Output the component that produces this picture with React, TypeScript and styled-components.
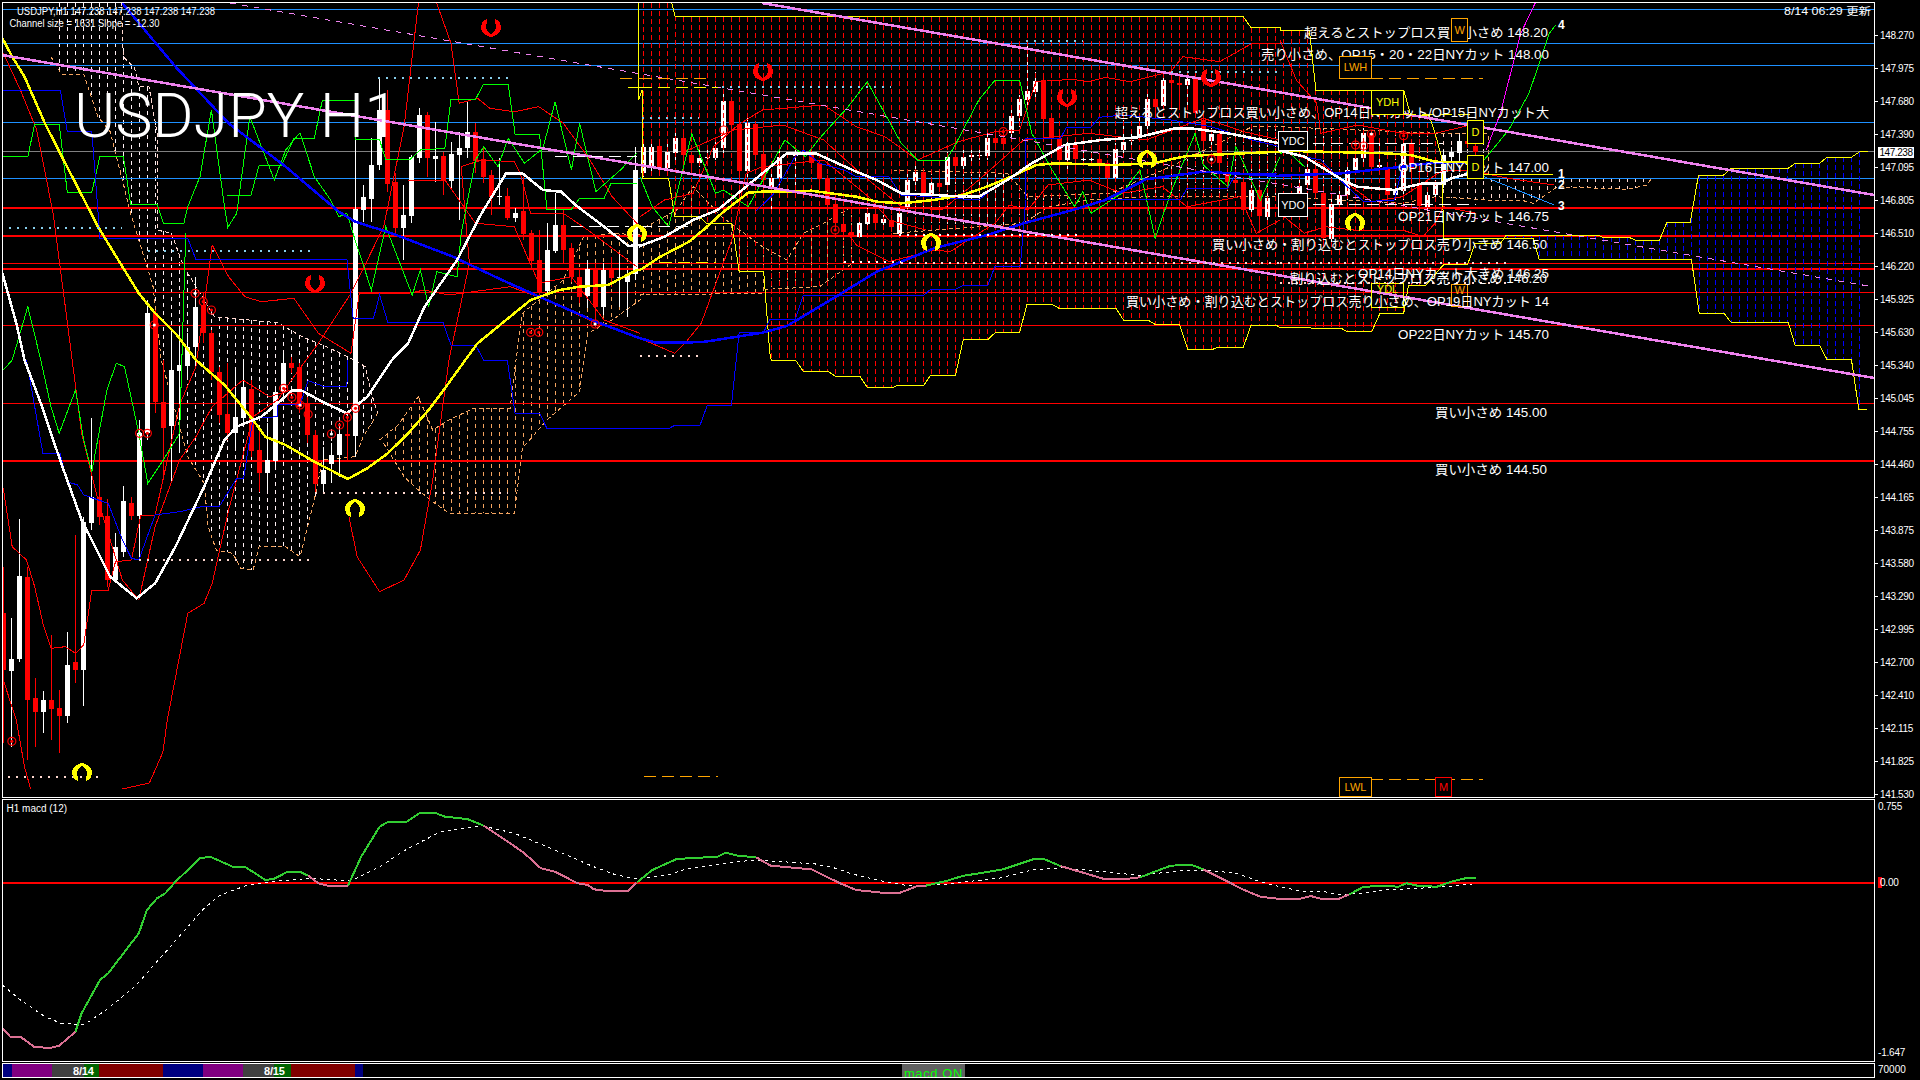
import styled, { createGlobalStyle } from "styled-components";

type Pt = [number, number];
type Candle = [number, number, number, number, number, string];

// zoom-crop coordinates -> page pixels (crop x is 2.45 per px, y is 3 per px)
const pts = (tile: number, s: string, dy = 0): Pt[] =>
  s
    .trim()
    .split(/\s+/)
    .map((p) => {
      const [x, y] = p.split(",").map(Number);
      return [x / 2.45 + tile * 640, (y + dy) / 3] as Pt;
    });

const toD = (p: Pt[]) => p.map(([x, y]) => `${x.toFixed(1)},${y.toFixed(1)}`).join(" ");

const interp = (p: Pt[], x: number) => {
  if (x < p[0][0] || x > p[p.length - 1][0]) return null;
  for (let i = 0; i < p.length - 1; i++) {
    const [a, b] = [p[i], p[i + 1]];
    if (x >= a[0] && x <= b[0]) {
      if (b[0] === a[0]) return b[1];
      return a[1] + ((x - a[0]) / (b[0] - a[0])) * (b[1] - a[1]);
    }
  }
  return null;
};

const RED = "#ff0000";
const DODGER = "#1e90ff";
const VIOLET = "#ee82ee";
const YELLOW = "#ffff00";
const BLUE = "#0000ff";
const LIME = "#00ff00";
const ORANGE = "#ffa500";
const SKY = "#87ceeb";
const PEACH = "#ffd8d0";
const PALE = "#fff0f4";
const SANDY = "#f4a460";

const candles0: Candle[] = [
  [12, 1840, 2010, 1700, 2230, "r"], [27, 1977, 2012, 1855, 2240, "w"], [47, 1728, 1977, 1558, 1985, "w"],
  [67, 1730, 2100, 1700, 2280, "r"], [87, 2094, 2135, 2035, 2240, "r"], [106, 2100, 2135, 2073, 2200, "w"],
  [126, 2100, 2127, 1905, 2220, "r"], [146, 2125, 2148, 2070, 2260, "r"], [165, 1995, 2148, 1896, 2170, "w"],
  [185, 1986, 2010, 1605, 2050, "r"], [204, 1567, 2010, 1550, 2118, "w"], [224, 1490, 1568, 1255, 1590, "w"],
  [243, 1490, 1550, 1320, 1575, "r"], [263, 1548, 1740, 1498, 1760, "r"], [283, 1640, 1740, 1600, 1740, "w"],
  [302, 1503, 1655, 1458, 1670, "w"], [322, 1510, 1548, 1490, 1560, "r"], [342, 1300, 1548, 1260, 1680, "w"],
  [361, 940, 1300, 900, 1320, "w"], [381, 940, 1205, 930, 1240, "r"], [400, 1205, 1285, 1080, 1430, "r"],
  [420, 1110, 1277, 1000, 1450, "w"], [440, 1095, 1113, 980, 1360, "w"], [459, 1040, 1098, 1000, 1130, "w"],
  [479, 920, 1040, 830, 1100, "w"], [498, 915, 1000, 880, 1030, "r"], [518, 1000, 1115, 990, 1140, "r"],
  [538, 1115, 1245, 1100, 1270, "r"], [557, 1243, 1300, 1090, 1320, "r"], [577, 1250, 1300, 1110, 1345, "w"],
  [597, 1160, 1255, 1080, 1280, "w"], [616, 1168, 1352, 1140, 1370, "r"], [636, 1350, 1420, 1280, 1475, "r"],
  [655, 1380, 1418, 1270, 1470, "w"], [675, 1177, 1382, 1160, 1400, "w"], [695, 1090, 1177, 1060, 1200, "w"],
  [714, 1090, 1105, 1070, 1120, "r"], [734, 1102, 1220, 1090, 1240, "r"], [753, 1210, 1305, 1190, 1330, "r"],
  [773, 1305, 1452, 1290, 1480, "r"], [792, 1410, 1452, 1340, 1480, "w"], [812, 1365, 1392, 1330, 1450, "w"],
  [832, 1302, 1365, 1270, 1430, "w"], [851, 1302, 1308, 1250, 1380, "r"], [871, 628, 1308, 415, 1370, "w"],
  [890, 590, 630, 555, 665, "w"], [910, 495, 597, 415, 665, "w"], [930, 330, 495, 235, 510, "w"],
  [949, 330, 552, 270, 575, "r"], [969, 545, 685, 520, 710, "r"], [988, 645, 685, 555, 780, "w"],
  [1008, 470, 648, 465, 670, "w"], [1028, 345, 473, 325, 490, "w"], [1047, 345, 475, 335, 530, "r"],
  [1067, 468, 476, 365, 545, "w"], [1086, 468, 542, 455, 585, "r"], [1106, 462, 542, 425, 565, "w"],
  [1126, 445, 465, 395, 660, "w"], [1145, 395, 445, 305, 475, "w"], [1165, 397, 483, 370, 520, "r"],
  [1185, 478, 530, 440, 550, "r"], [1204, 525, 592, 510, 645, "r"], [1224, 588, 592, 475, 615, "w"],
  [1243, 588, 655, 565, 660, "r"], [1263, 640, 655, 625, 665, "w"], [1283, 632, 702, 530, 720, "r"],
  [1302, 698, 782, 690, 800, "r"], [1322, 780, 875, 690, 890, "r"], [1341, 750, 872, 670, 880, "w"],
  [1361, 675, 752, 580, 760, "w"], [1380, 675, 750, 630, 790, "r"], [1400, 745, 830, 730, 845, "r"],
  [1420, 830, 890, 810, 910, "r"], [1439, 808, 888, 780, 925, "w"], [1459, 810, 920, 790, 980, "r"],
  [1479, 810, 920, 790, 945, "w"], [1498, 810, 833, 770, 860, "r"], [1518, 830, 835, 760, 920, "w"],
  [1537, 822, 845, 810, 950, "w"], [1557, 510, 822, 440, 840, "w"],
];

const candles1: Candle[] = [
  [8, 440, 518, 420, 530, "w"], [27, 440, 500, 425, 515, "w"], [47, 438, 505, 420, 525, "r"], [67, 455, 505, 430, 520, "w"],
  [87, 415, 458, 395, 480, "w"], [106, 415, 465, 395, 490, "r"], [126, 465, 490, 455, 520, "r"], [146, 473, 490, 440, 500, "w"],
  [165, 472, 475, 440, 495, "w"], [185, 445, 475, 415, 480, "w"], [204, 303, 445, 275, 460, "w"], [224, 303, 375, 295, 450, "r"],
  [243, 372, 512, 350, 530, "r"], [263, 368, 512, 350, 535, "w"], [283, 372, 464, 362, 480, "r"], [302, 462, 540, 450, 575, "r"],
  [322, 535, 560, 510, 630, "w"], [342, 470, 533, 440, 570, "w"], [381, 462, 468, 445, 570, "w"], [400, 458, 466, 440, 480, "r"],
  [420, 465, 490, 450, 505, "r"], [440, 490, 537, 480, 565, "r"], [459, 535, 615, 525, 630, "r"], [479, 612, 670, 600, 690, "r"],
  [498, 672, 695, 660, 705, "r"], [518, 695, 710, 690, 725, "r"], [538, 670, 710, 660, 715, "w"], [557, 640, 672, 625, 690, "w"],
  [577, 643, 670, 630, 685, "r"], [597, 657, 670, 645, 680, "w"], [616, 660, 680, 645, 695, "r"], [636, 640, 703, 625, 708, "w"],
  [655, 540, 620, 520, 630, "w"], [675, 515, 542, 495, 560, "w"], [695, 515, 582, 505, 600, "r"], [714, 548, 585, 535, 600, "w"],
  [734, 550, 560, 520, 575, "r"], [753, 472, 555, 455, 570, "w"], [773, 472, 498, 460, 515, "r"], [792, 472, 498, 450, 510, "w"],
  [812, 465, 472, 440, 490, "w"], [832, 465, 468, 440, 480, "w"], [851, 415, 468, 395, 480, "w"], [871, 415, 430, 395, 445, "r"],
  [891, 415, 432, 390, 445, "r"], [910, 347, 398, 320, 410, "w"], [930, 298, 347, 285, 380, "w"], [949, 273, 300, 120, 330, "w"],
  [969, 243, 275, 215, 300, "w"], [988, 240, 357, 232, 410, "r"], [1008, 354, 415, 340, 440, "r"], [1028, 415, 480, 400, 510, "r"],
  [1047, 435, 480, 415, 515, "w"], [1067, 435, 478, 420, 520, "r"], [1086, 477, 479, 450, 490, "w"], [1106, 477, 479, 455, 495, "w"],
  [1126, 478, 492, 465, 510, "r"], [1145, 490, 535, 480, 580, "r"], [1165, 448, 535, 430, 545, "w"], [1185, 425, 450, 360, 460, "w"],
  [1204, 421, 424, 400, 440, "w"], [1224, 378, 412, 355, 425, "w"], [1243, 298, 378, 270, 390, "w"], [1263, 298, 320, 280, 340, "r"],
  [1283, 240, 318, 225, 330, "w"], [1302, 240, 250, 210, 330, "r"], [1322, 250, 255, 225, 320, "r"], [1341, 238, 255, 225, 320, "w"],
  [1361, 238, 340, 225, 355, "r"], [1380, 360, 423, 350, 445, "r"], [1400, 402, 423, 385, 440, "w"], [1420, 402, 490, 395, 540, "r"],
  [1439, 515, 545, 505, 570, "r"], [1459, 540, 548, 530, 560, "r"], [1479, 545, 630, 535, 645, "r"], [1498, 570, 630, 555, 645, "w"],
  [1518, 570, 648, 560, 690, "r"], [1537, 595, 650, 585, 670, "w"],
];

const candles2: Candle[] = [
  [47, 558, 590, 530, 600, "w"], [67, 508, 555, 490, 570, "w"], [87, 508, 580, 495, 595, "r"], [106, 580, 715, 570, 730, "r"],
  [126, 612, 718, 595, 735, "w"], [146, 585, 612, 560, 615, "w"], [165, 510, 585, 495, 600, "w"], [185, 475, 510, 450, 525, "w"],
  [204, 400, 475, 385, 490, "w"], [224, 400, 500, 390, 510, "r"], [243, 495, 500, 420, 525, "w"], [263, 500, 585, 490, 610, "r"],
  [283, 572, 585, 545, 600, "w"], [302, 432, 572, 415, 600, "w"], [322, 432, 505, 420, 545, "r"], [342, 555, 618, 500, 690, "r"],
  [361, 585, 620, 575, 640, "w"], [381, 555, 585, 540, 595, "w"], [400, 465, 555, 450, 565, "w"], [420, 455, 470, 440, 495, "w"],
  [440, 423, 458, 405, 480, "w"], [459, 423, 432, 400, 445, "r"], [479, 438, 455, 432, 470, "r"],
];

const allCandles = [
  ...candles0.map((c) => [0, ...c] as [number, ...Candle]),
  ...candles1.map((c) => [1, ...c] as [number, ...Candle]),
  ...candles2.map((c) => [2, ...c] as [number, ...Candle]),
].map(([t, zx, a, b, c, d, col]) => {
  const rx = zx / 2.45 + t * 640;
  const x = 3 + 8 * Math.round((rx - 3) / 8);
  return { x, top: a / 3, bot: b / 3, hi: c / 3, lo: d / 3, col };
});

// ichimoku edges
const redTop = [
  ...pts(1, "5,8 78,8 86,50 1478,50 1497,83 1568,83"),
  ...pts(2, "0,92 72,92 88,270 303,270 320,345 365,345 380,400 398,480 400,700"),
];
const redBot = [
  ...pts(1, "5,8 5,535 70,535 85,650 145,650 163,670 225,670 243,815 303,815 318,1060"),
  ...pts(1, "322,482 382,482 400,514 460,514 478,528 538,528 557,562 620,562 632,556 695,556 712,526 773,526 792,418 853,418 870,398 930,398 948,314 1010,314 1027,325 1166,325 1185,361 1245,361 1262,373 1322,373 1342,448 1403,448 1417,442 1478,442 1497,376 1560,376", 600),
  ...pts(2, "0,983 150,985 163,994 225,994 245,940 303,940 315,855 358,855 400,795"),
];
const yellowA = [
  ...redTop,
  ...pts(2, "400,715 550,715 620,715 635,778 1008,778 1027,940 1088,940 1105,967 1245,967 1262,1036 1322,1036 1340,1078 1400,1078 1418,1228 1438,1228"),
];
const blueTop = pts(2, "555,705 780,705 790,712 855,712 870,720 930,720 948,667 1005,667 1025,527 1085,527 1105,505 1245,505 1262,490 1322,490 1340,472 1400,472 1420,455 1440,455");
const blueBot = pts(2, "555,715 620,715 635,778 1008,778 1027,940 1088,940 1105,967 1245,967 1262,1036 1322,1036 1340,1078 1400,1078 1418,1228 1438,1228");
const yellowB = [
  ...pts(0, "1565,8 1565,300"),
  ...pts(1, "5,270 5,535").map(([x, y]) => [x, y] as Pt),
  ...redBot.slice(2),
  ...pts(2, "460,792 478,730 540,730"),
  ...blueTop,
];

const paleTop = pts(0, "125,8 298,8 302,170 330,205 340,260 365,260 385,400 385,690 420,700 450,800 525,950 680,968 740,1010 800,1040 860,1075 895,1100 910,1180 925,1240");
const paleBot = pts(0, "125,170 150,222 205,222 240,350 270,395 300,540 320,640 345,740 375,860 395,1080 460,1370 500,1450 510,1580 530,1650 570,1660 590,1705 620,1710 635,1640 700,1640 735,1670 770,1500 790,1380 870,1370 890,1310 925,1240");
const sandTop = [
  ...pts(0, "930,1320 975,1275 1025,1190 1060,1290 1100,1260 1160,1225 1250,1225 1262,1100 1280,940 1380,840 1430,710 1500,700 1568,705"),
  ...pts(1, "0,690 90,630 130,560 200,650 300,740 360,780 400,700 450,670 520,620"),
];
const sandBot = [
  ...pts(0, "940,1330 990,1430 1020,1465 1060,1505 1100,1540 1260,1540 1280,1345 1340,1260 1420,1175 1430,1080 1440,1000 1500,960 1568,900"),
  ...pts(1, "0,885 300,880 310,868 440,860 520,790"),
];
const pale2Top = [
  ...pts(1, "620,510 900,520 950,590 1150,580 1300,500 1500,380 1568,380"),
  ...pts(2, "0,380 385,400 510,400 510,535 910,535"),
];
const pale2Bot = [
  ...pts(1, "620,700 940,670 1000,620 1100,600 1240,590 1568,590"),
  ...pts(2, "0,590 300,610 380,590 510,600 590,600 620,610 680,560 850,568 900,555 910,535"),
];

const hatch = (top: Pt[], bot: Pt[]) => {
  const out: [number, number, number][] = [];
  for (let k = 0; k < 240; k++) {
    const x = 3 + 8 * k;
    const a = interp(top, x);
    const b = interp(bot, x);
    if (a !== null && b !== null && b > a) out.push([x, a, b]);
  }
  return out;
};

const yellowMA = [
  ...pts(0, "6,115 30,170 60,230 110,370 160,490 240,680 300,800 340,880 380,940 430,1000 480,1080 550,1155 620,1260 650,1310 700,1335 770,1385 852,1437 900,1405 950,1360 1000,1300 1050,1230 1090,1165 1140,1080 1170,1030 1230,970 1300,900 1370,870 1420,860 1490,855 1560,810"),
  ...pts(1, "0,810 50,770 120,725 160,685 200,640 265,578 300,575 380,575 420,572 530,590 580,605 640,610 720,600 790,585 850,560 920,525 970,495 1020,490 1160,495 1260,490 1300,478 1340,468 1480,460 1568,455"),
  ...pts(2, "0,452 260,460 320,465 380,485 460,487"),
];
const whiteMA = [
  ...pts(0, "6,820 40,970 60,1080 100,1210 150,1390 200,1560 270,1730 335,1795 380,1750 430,1640 500,1460 550,1320 580,1280 640,1250 690,1200 715,1172 740,1172 790,1205 850,1240 900,1190 960,1080 1000,1030 1040,920 1120,780 1180,640 1240,520 1280,520 1330,570 1375,575 1410,615 1480,680 1540,738 1568,735"),
  ...pts(1, "0,738 60,710 130,660 190,630 250,570 310,510 360,460 430,460 530,515 580,540 640,580 800,590 830,590 900,540 960,490 1040,435 1130,420 1220,412 1310,385 1350,385 1440,400 1568,430"),
  ...pts(2, "0,452 60,470 160,545 190,560 280,570 350,550 395,550 420,535 480,515"),
];
const blueMA = [
  ...pts(0, "300,10 430,200 560,370 700,500 830,635 870,665 960,700 1110,770 1230,840 1330,895 1460,965 1568,1015"),
  ...pts(1, "0,415 40,428 105,428 160,425 300,398 360,378 480,290 580,215 720,145 850,105 940,70 1060,30 1140,0", 600),
  ...pts(1, "1240,538 1380,515 1568,528"),
  ...pts(2, "0,527 150,520 300,500 380,488 460,488"),
];

const thinBlue = [
  pts(0, "6,270 148,270 165,394 225,394 245,715 460,715 480,778 850,778 865,955 915,955 930,885 950,967 1085,967 1105,1035 1165,1035 1185,1080 1243,1080 1262,1240 1322,1240 1340,1285 1568,1285"),
  pts(0, "65,1080 105,1360 147,1360 165,1445 190,1455 205,1485 265,1510 300,1620 322,1675 340,1680 380,1545 440,1535 500,1518 538,1518 580,1435 597,1435 605,1370 620,1255 680,1250 680,1215 735,1213 755,1142 790,1158 850,1158 852,1080"),
  pts(1, "0,686 70,686 85,676 147,676 165,616 224,616 243,397 303,397 318,358 380,358 400,286 695,286 712,268 773,268 792,256 852,256 870,198 932,198 945,0", 600),
  pts(1, "945,598 945,415 1030,415 1045,382 1105,382 1125,352 1185,345 1300,360 1400,380 1500,420 1568,440"),
  pts(1, "1145,598 1325,598 1340,565 1440,565 1460,520 1560,520"),
  pts(2, "60,470 100,480 165,560 205,605 280,600 300,500 340,490 460,490"),
  pts(1, "285,632 325,585 380,470 400,450 440,490 500,510 530,530 610,530 640,585 830,600 870,560 900,540"),
];

const thinGreen = [
  pts(0, "6,470 68,470 85,372 145,372 165,577 225,577 245,468 302,468 320,612 385,612 400,670 450,672 460,620 490,530 518,330 550,620 558,682 580,640 612,350 672,540 700,450 735,398 770,530 810,600 830,650 850,640 870,720 910,870 945,680 1010,885 1030,810 1050,920 1070,815 1120,830 1130,700 1165,480 1185,440 1220,500 1245,415 1285,490 1330,445 1360,305 1400,510 1420,370 1460,575 1520,510 1560,460"),
  pts(0, "555,585 615,585 635,495 690,495 720,415 770,415 790,300 870,300 870,418 930,420 945,478 1005,478 1030,450 1090,445 1105,298 1165,298 1185,252 1245,252 1262,403 1322,403 1340,628 1400,628 1420,595 1480,595 1497,550 1560,550"),
  pts(0, "8,1110 30,1080 68,920 100,1080 125,1220 145,1300 185,1170 205,1320 225,1415 262,1170 285,1090 305,1100 340,1300 362,1450 400,1380 440,1300 450,900 455,700"),
  pts(1, "0,530 30,620 70,680 127,402 185,580 205,570 265,620 355,420 405,470 440,415 510,320 557,245 640,430 680,480 750,480 770,440 830,300 870,240 930,240 960,400 1010,510 1065,620 1085,575 1105,640 1180,580 1225,510 1262,715 1300,580 1360,400 1380,495 1440,560 1460,440 1520,600 1568,470"),
  pts(2, "0,460 20,455 60,500"),
  pts(2, "500,480 560,390 610,280 660,100 675,75"),
];

const thinRed = [
  pts(0, "8,160 50,270 90,390 130,640 160,920 200,1300 240,1500 300,1740 340,1800 380,1580 440,1380 480,1310 520,1220 595,1140 660,1190 715,1170"),
  pts(0, "8,1465 30,1640 65,1680 85,1760 105,1870 125,1945 160,1940 185,1960 205,1935 225,1770 265,1770 283,1685 322,1680 345,1545 380,1545 440,1215 480,1100 520,735 560,830 600,890 640,905 720,895 780,1000 860,1060 880,880 1000,880 1040,870 1100,885 1250,860 1340,900 1460,970"),
  pts(0, "8,2040 40,2160 60,2300 75,2367"),
  pts(0, "300,2367 366,2349 399,2257 410,2160 460,1840 500,1810 520,1750 560,1530 620,1250 680,1200 720,1130 780,1030 860,880 940,680 990,380 1025,10"),
  pts(0, "1070,10 1105,130 1125,310 1170,295 1200,325 1260,335 1320,320 1380,370 1440,470 1500,590 1568,680"),
  pts(0, "855,1550 875,1670 930,1775 990,1740 1030,1650 1060,1440 1100,1080 1150,790 1130,500 1180,480 1260,485 1275,520 1300,640 1380,640 1440,690 1560,800"),
  pts(0, "1000,540 1090,540 1165,670 1260,680 1320,850 1400,830 1480,960 1568,1000"),
  pts(1, "0,650 60,600 130,580 180,440 240,375 300,330 450,315 530,380 600,410 680,480 780,425 870,395 930,390 970,245 1060,238 1100,245 1140,232 1200,245 1300,215 1330,170 1420,185 1500,130 1568,130"),
  pts(1, "0,1015 85,1060 110,1030 150,970 225,720 260,520 300,500 450,480 560,590 610,660 700,690"),
  pts(1, "510,700 530,735 610,785 720,750 760,755 830,700 870,670 905,615 950,630 1000,555 1100,540 1180,580 1280,560 1340,620 1470,590 1510,700 1568,660"),
  pts(1, "100,460 230,390 350,375 450,420 540,520 640,620 740,630 830,540 940,420 1100,400 1240,420 1380,355 1480,395 1568,420"),
  pts(2, "0,120 40,240 90,310 100,400 190,375 300,400 380,400 450,380 480,370"),
  pts(2, "0,640 60,700 110,680 180,690 300,690 350,710 380,670 400,620 480,640"),
  pts(2, "0,450 100,490 225,605 300,590 400,510 480,510"),
  pts(2, "500,520 560,535 670,555"),
];

const dotted: [number, string, string][] = [
  [0, SKY, "925,233 1245,233"], [0, SKY, "22,684 300,684"], [0, SKY, "362,752 772,752"],
  [1, SKY, "945,122 1085,122"], [1, SKY, "5,353 145,353"], [1, SKY, "200,260 615,260"], [1, SKY, "1300,215 1568,215"],
  [0, PEACH, "772,1478 1245,1478"], [0, PEACH, "340,1680 772,1680"], [0, PEACH, "20,2330 250,2330"],
  [1, PEACH, "0,1067 145,1067"], [1, "#ffffff", "635,705 1080,705"], [1, "#ffffff", "500,785 640,785"],
  [1, PEACH, "640,790 1568,790"], [2, PEACH, "0,790 555,790"], [2, PEACH, "0,850 555,850"],
];

const dashes: [number, string, string][] = [
  [0, "#ffffff", "1360,470 1560,470"], [0, "#ffffff", "1400,680 1540,680"], [0, ORANGE, "1520,235 1568,235"],
  [1, ORANGE, "0,235 170,235"], [0, YELLOW, "1538,262 1568,262"], [1, YELLOW, "0,262 190,262"],
  [1, YELLOW, "50,788 185,788"], [1, "#ffffff", "0,680 130,680"], [1, ORANGE, "10,2330 190,2330"],
  [2, "#ffffff", "80,430 400,430"], [2, "#ffffff", "80,612 480,612"], [2, ORANGE, "224,235 498,235"],
  [2, YELLOW, "303,342 480,342"], [2, ORANGE, "224,2337 498,2337"],
];

const channel: [Pt, Pt][] = [
  [[2, 55], [1874, 378]],
  [[762, 3], [1874, 195]],
];

const levels: [number, string, number][] = [
  [9, DODGER, 1], [43, DODGER, 1], [65, DODGER, 1], [122, DODGER, 1], [178, DODGER, 1], [151, "#808080", 1],
  [207, RED, 2], [235, RED, 2], [263, RED, 1], [268, RED, 2], [292, RED, 1], [325, RED, 1], [403, RED, 1], [460, RED, 2],
];

const notes: [number, number, number, string][] = [
  [1304, 32, 244, "超えるとストップロス買い小さめ 148.20"],
  [1261, 54, 288, "売り小さめ、OP15・20・22日NYカット 148.00"],
  [1115, 112, 434, "超えるとストップロス買い小さめ、OP14日NYカット/OP15日NYカット大"],
  [1398, 167, 151, "OP16日NYカット 147.00"],
  [1398, 216, 151, "OP21日NYカット 146.75"],
  [1212, 244, 335, "買い小さめ・割り込むとストップロス売り小さめ 146.50"],
  [1358, 273, 191, "OP14日NYカット大きめ 146.25"],
  [1290, 278, 257, "割り込むとストップロス売り小さめ 146.20"],
  [1126, 301, 423, "買い小さめ・割り込むとストップロス売り小さめ、OP19日NYカット 14"],
  [1398, 334, 151, "OP22日NYカット 145.70"],
  [1435, 412, 112, "買い小さめ 145.00"],
  [1435, 469, 112, "買い小さめ 144.50"],
];

const boxes: [number, number, number, number, string, string, boolean][] = [
  [420, 55, 460, 125, ORANGE, "W", true], [146, 168, 224, 235, ORANGE, "LWH", true], [224, 272, 303, 342, YELLOW, "YDH", true],
  [459, 360, 499, 430, YELLOW, "D", true], [459, 465, 499, 535, YELLOW, "D", true], [-3, 395, 67, 452, "#ffffff", "YDC", true],
  [-3, 580, 67, 650, "#ffffff", "YDO", true], [224, 850, 303, 922, YELLOW, "YDL", false], [420, 853, 460, 920, ORANGE, "W", false],
  [146, 2333, 224, 2390, ORANGE, "LWL", true], [381, 2333, 420, 2390, RED, "M", true],
];

const rings: [number, number, number][] = [
  [0, 478, 880], [0, 498, 905], [0, 518, 930], [0, 378, 975], [0, 1300, 997], [0, 1320, 997], [0, 1458, 972],
  [0, 695, 1165], [0, 715, 1192], [0, 735, 1215], [0, 755, 1243], [0, 832, 1275], [0, 812, 1302], [0, 851, 1252], [0, 871, 1225],
  [0, 342, 1300], [0, 361, 1300], [0, 29, 2224], [1, 205, 390], [1, 478, 690], [1, 890, 395], [1, 1400, 478],
  [2, 185, 435], [2, 205, 438], [2, 224, 402], [2, 303, 407],
];

const arrows: [number, number, string][] = [
  [491, 28, RED], [315, 284, RED], [763, 72, RED], [1067, 98, RED], [1211, 78, RED],
  [355, 508, YELLOW], [637, 233, YELLOW], [931, 242, YELLOW], [1147, 159, YELLOW], [1355, 222, YELLOW], [82, 772, YELLOW],
];

const ARROW_D = "M-3.5,-9.5 C-8,-8 -10,-4 -10,0 C-10,5 -5,7 0,9.5 C5,7 10,5 10,0 C10,-4 8,-8 3.5,-9.5 L5,-1 C5,2 2,4.5 0,6.5 C-2,4.5 -5,2 -5,-1 Z";

// macd panel
const macdGreen = [
  pts(0, "185,755 200,700 245,600 265,580 340,460 360,390 385,355 405,340 430,305 490,235 515,230 570,260 600,260 650,300 670,297 705,275 735,275 755,287", 2340),
  pts(0, "852,318 885,230 930,140 950,126 995,126 1030,98 1065,98 1090,110 1145,117 1185,137", 2340),
  [...pts(0, "1560,308 1568,300", 2340), ...pts(1, "0,240 30,210 90,177 190,170 210,158 240,167 285,172", 2400)],
  pts(1, "700,257 750,243 790,228 890,208 965,177 990,177 1030,198", 2400),
  pts(1, "1225,232 1300,197 1350,194 1380,208", 2400),
  pts(2, "170,403 205,380 260,378 290,380 310,370 340,378 385,380 420,365 460,353 480,353", 2280),
];
const macdPink = [
  pts(0, "6,745 25,770 50,770 85,802 125,803 145,797 185,755", 2340),
  pts(0, "755,287 780,310 805,318 852,318", 2340),
  pts(0, "1185,137 1250,190 1285,220 1325,265 1360,275 1415,310 1440,315 1455,328 1480,332 1540,332 1560,308", 2340),
  pts(1, "285,172 320,197 420,208 490,250 530,270 600,279 635,279 680,258 700,257", 2400),
  pts(1, "1030,198 1140,238 1185,238 1225,232", 2400),
  [...pts(1, "1380,208 1480,270 1520,290 1568,297", 2400), ...pts(2, "0,416 50,416 75,408 100,416 145,416 170,403", 2280)],
];
const macdSignal = [
  ...pts(0, "6,615 50,660 110,710 150,730 205,735 260,690 330,620 410,510 500,385 540,345 600,318 680,303 760,295 860,303 930,260 1000,205 1080,155 1180,137 1260,160 1350,205 1450,258 1510,285 1568,298", 2340),
  ...pts(1, "0,237 70,224 110,208 230,186 285,180 350,185 430,192 480,205 520,222 600,245 660,258 760,252 810,244 880,235 960,210 1030,203 1160,218 1220,226 1330,212 1400,212 1460,220 1520,245 1568,260", 2400),
  ...pts(2, "0,380 50,393 110,395 145,404 200,400 260,390 340,385 400,380 470,373", 2280),
];

const priceTicks = [
  "148.270", "147.975", "147.680", "147.390", "147.095", "146.805", "146.510", "146.220", "145.925", "145.630", "145.340", "145.045",
  "144.755", "144.460", "144.165", "143.875", "143.580", "143.290", "142.995", "142.700", "142.410", "142.115", "141.825", "141.530",
];

const sessions: [number, string, string?][] = [
  [9, "#000080"], [40, "#800080"], [32, "#404040", "8/14"], [15, "#006400"], [64, "#800000"], [40, "#000080"], [40, "#800080"],
  [31, "#404040", "8/15"], [17, "#006400"], [64, "#800000"], [8, "#000080"],
];

const GlobalStyle = createGlobalStyle`
  html, body {
    margin: 0;
    height: 100%;
    background: #000;
    overflow: hidden;
  }
`;

const Terminal = styled.div`
  width: 1920px;
  height: 1080px;
  padding: 2px 0 0 2px;
  box-sizing: border-box;
  display: flex;
  flex-direction: column;
  gap: 1px;
  background: #000;
  font-family: "Liberation Sans", sans-serif;
  color: #fff;
`;

const Row = styled.div<{ $h: number }>`
  display: flex;
  height: ${({ $h }) => $h}px;
  flex: none;
`;

const Plot = styled.div`
  width: 1873px;
  height: 100%;
  box-sizing: border-box;
  border: 1px solid #fff;
  overflow: hidden;
  flex: none;
`;

const PlotSvg = styled.svg`
  display: block;
  width: 1871px;
  height: 100%;
  shape-rendering: crispEdges;
`;

const PriceAxis = styled.div`
  position: relative;
  flex: 1;
  padding-top: 17px;
  display: flex;
  flex-direction: column;
`;

const PriceTick = styled.div`
  height: 33px;
  flex: none;
  display: flex;
  align-items: center;
  gap: 2px;
  font-size: 10px;
  letter-spacing: -0.35px;
`;

const TickMark = styled.span`
  width: 3px;
  height: 1px;
  background: #fff;
  flex: none;
`;

const PriceTag = styled.div`
  position: absolute;
  top: 145px;
  left: 3px;
  width: 36px;
  height: 11px;
  background: #fff;
  color: #000;
  font-size: 10px;
  line-height: 11px;
  letter-spacing: -0.45px;
  text-align: center;
`;

const MacdAxis = styled.div`
  flex: 1;
  padding: 2px 0 0 3px;
  font-size: 10px;
  letter-spacing: -0.2px;
`;

const MacdTick = styled.div<{ $mt: number }>`
  height: 12px;
  line-height: 12px;
  margin-top: ${({ $mt }) => $mt}px;
`;

const ZeroMark = styled.span`
  display: inline-block;
  width: 4px;
  height: 11px;
  margin-right: -2px;
  background: #ff0000;
  vertical-align: top;
`;

const SessionBar = styled.div`
  width: 1873px;
  height: 100%;
  box-sizing: border-box;
  border: 1px solid #fff;
  display: flex;
  overflow: hidden;
  flex: none;
`;

const Session = styled.div<{ $w: number; $bg: string }>`
  width: ${({ $w }) => $w}px;
  flex: none;
  position: relative;
  background: ${({ $bg }) => $bg};
`;

const SessionDate = styled.span`
  position: absolute;
  left: 21px;
  top: 1px;
  z-index: 1;
  font-size: 11px;
  font-weight: 700;
  line-height: 12px;
  letter-spacing: -0.2px;
  white-space: nowrap;
`;

const MacdButton = styled.div`
  margin-left: 539px;
  width: 63px;
  height: 14px;
  background: #606060;
  color: #00ff00;
  font-size: 13px;
  line-height: 20px;
  text-align: center;
  overflow: hidden;
  letter-spacing: 0.6px;
`;

const VolumeLabel = styled.div`
  flex: 1;
  padding-left: 3px;
  font-size: 10px;
  line-height: 14px;
`;

const Note = styled.text`
  font-family: "Liberation Sans", "Noto Sans CJK JP", sans-serif;
  font-size: 13px;
  fill: #fff;
`;

const Small = styled.text<{ $c?: string; $cjk?: boolean }>`
  font-family: "Liberation Sans", ${({ $cjk }) => ($cjk ? '"Noto Sans CJK JP", ' : "")}sans-serif;
  font-size: 10px;
  fill: ${({ $c }) => $c || "#fff"};
`;

const BoxLabel = styled.text<{ $c: string }>`
  font-family: "Liberation Sans", sans-serif;
  font-size: 11px;
  fill: ${({ $c }) => $c};
`;

const Big = styled.text`
  font-family: Roboto, "Liberation Sans", sans-serif;
  font-size: 62px;
  font-weight: 300;
  fill: #fff;
`;

const Num = styled.text`
  font-family: "Liberation Sans", sans-serif;
  font-size: 12px;
  font-weight: 700;
  fill: #fff;
`;

const Dashes = ({ color, points }: { color: string; points: Pt[] }) => (
  <polyline points={toD(points)} fill="none" stroke={color} strokeWidth={1} strokeDasharray="12 6" />
);

const MainChart = () => (
  <PlotSvg viewBox="3 3 1871 794" preserveAspectRatio="none">
    {hatch(paleTop, paleBot).map(([x, a, b]) => (
      <line key={x} x1={x} x2={x} y1={a} y2={b} stroke={PALE} strokeDasharray="4 4" />
    ))}
    {hatch(sandTop, sandBot).map(([x, a, b]) => (
      <line key={x} x1={x} x2={x} y1={a} y2={b} stroke={SANDY} strokeDasharray="4 4" />
    ))}
    {hatch(pale2Top, pale2Bot).map(([x, a, b]) => (
      <line key={x} x1={x} x2={x} y1={a} y2={b} stroke={PEACH} strokeDasharray="4 4" />
    ))}
    <polyline points={toD(paleTop)} fill="none" stroke={PEACH} strokeDasharray="4 3" />
    <polyline points={toD(paleBot)} fill="none" stroke={SANDY} strokeDasharray="4 3" />
    <polyline points={toD(sandTop)} fill="none" stroke={SANDY} strokeDasharray="4 3" />
    <polyline points={toD(sandBot)} fill="none" stroke={SANDY} strokeDasharray="4 3" />
    <polyline points={toD(pale2Top)} fill="none" stroke={SANDY} strokeDasharray="4 3" />
    <polyline points={toD(pale2Bot)} fill="none" stroke={SANDY} strokeDasharray="4 3" />

    {levels.map(([y, c, w]) => (
      <line key={y} x1={3} x2={1874} y1={y + 0.5} y2={y + 0.5} stroke={c} strokeWidth={w} />
    ))}

    {allCandles.map((c, i) => {
      const col = c.col === "r" ? RED : "#ffffff";
      return (
        <g key={i}>
          <line x1={c.x} x2={c.x} y1={c.hi} y2={c.lo} stroke={col} />
          <rect x={c.x - 2} y={c.top} width={5} height={Math.max(c.bot - c.top, 1)} fill={col} />
        </g>
      );
    })}

    {hatch(redTop, redBot).map(([x, a, b]) => (
      <line key={x} x1={x} x2={x} y1={a} y2={b} stroke={RED} strokeDasharray="5 3" />
    ))}
    {hatch(blueTop, blueBot).map(([x, a, b]) => (
      <line key={x} x1={x} x2={x} y1={a} y2={b} stroke={BLUE} strokeDasharray="5 3" />
    ))}

    <polyline points={toD(yellowA)} fill="none" stroke={YELLOW} />
    <polyline points={toD(yellowB)} fill="none" stroke={YELLOW} />

    {thinRed.map((p, i) => (
      <polyline key={i} points={toD(p)} fill="none" stroke={RED} />
    ))}
    {thinGreen.map((p, i) => (
      <polyline key={i} points={toD(p)} fill="none" stroke={LIME} />
    ))}
    {thinBlue.map((p, i) => (
      <polyline key={i} points={toD(p)} fill="none" stroke={BLUE} />
    ))}
    <polyline points={toD(pts(2, "505,450 540,340 590,100 625,10"))} fill="none" stroke="#ff00ff" />
    <polyline points={toD(pts(2, "500,530 672,615"))} fill="none" stroke={DODGER} />
    <polyline points={toD(pts(2, "500,525 672,522"))} fill="none" stroke={YELLOW} />

    <polyline points={toD(blueMA)} fill="none" stroke={BLUE} strokeWidth={2.5} />
    <polyline points={toD(yellowMA)} fill="none" stroke={YELLOW} strokeWidth={2.5} />
    <polyline points={toD(whiteMA)} fill="none" stroke="#ffffff" strokeWidth={2.5} />

    {channel.map(([a, b]) => (
      <line key={a[0]} x1={a[0]} y1={a[1]} x2={b[0]} y2={b[1]} stroke={VIOLET} strokeWidth={2.5} />
    ))}
    <line x1={230} y1={3} x2={1874} y2={287} stroke={VIOLET} strokeDasharray="6 6" />

    {dotted.map(([t, c, s], i) => {
      const p = pts(t, s);
      return (
        <line key={i} x1={p[0][0]} y1={p[0][1]} x2={p[1][0]} y2={p[1][1]} stroke={c} strokeWidth={2} strokeDasharray="2 6" />
      );
    })}
    {dashes.map(([t, c, s], i) => (
      <Dashes key={i} color={c} points={pts(t, s)} />
    ))}

    {rings.map(([t, x, y], i) => {
      const [p] = pts(t, `${x},${y}`);
      return (
        <g key={i} shapeRendering="auto">
          <circle cx={p[0]} cy={p[1]} r={4} fill="none" stroke={RED} strokeWidth={1.2} />
          <circle cx={p[0]} cy={p[1]} r={1.6} fill={i % 3 === 0 ? "#ffffff" : RED} />
        </g>
      );
    })}

    {arrows.map(([x, y, c], i) => (
      <path key={i} d={ARROW_D} fill={c} transform={`translate(${x} ${y})${c === YELLOW ? " scale(1 -1)" : ""}`} />
    ))}

    {boxes.filter((b) => !b[6]).map(([x1, y1, x2, y2, c, s], i) => {
      const [a, b] = pts(2, `${x1},${y1} ${x2},${y2}`);
      return (
        <g key={i}>
          <rect x={a[0]} y={a[1]} width={b[0] - a[0]} height={b[1] - a[1]} fill="none" stroke={c} />
          <BoxLabel $c={c} x={(a[0] + b[0]) / 2} y={a[1] + 10} textAnchor="middle">
            {s}
          </BoxLabel>
        </g>
      );
    })}

    {notes.map(([x, y, w, s]) => (
      <Note key={s} x={x} y={y + 5} textLength={w} lengthAdjust="spacingAndGlyphs">
        {s}
      </Note>
    ))}

    {boxes.filter((b) => b[6]).map(([x1, y1, x2, y2, c, s], i) => {
      const [a, b] = pts(2, `${x1},${y1} ${x2},${y2}`);
      return (
        <g key={i}>
          <rect x={a[0]} y={a[1]} width={b[0] - a[0]} height={b[1] - a[1]} fill="#000" stroke={c} />
          <BoxLabel $c={c} x={(a[0] + b[0]) / 2} y={(a[1] + b[1]) / 2 + 4} textAnchor="middle">
            {s}
          </BoxLabel>
        </g>
      );
    })}

    <Num x={1558} y={29}>4</Num>
    <Num x={1558} y={178}>1</Num>
    <Num x={1558} y={189}>2</Num>
    <Num x={1558} y={210}>3</Num>

    <Big x={74} y={137} textLength={325} lengthAdjust="spacingAndGlyphs">
      USDJPY H1
    </Big>
    <Small x={17} y={14.5} textLength={198} lengthAdjust="spacingAndGlyphs">
      USDJPY,H1  147.238 147.238 147.238 147.238
    </Small>
    <Small x={9.5} y={27} textLength={150} lengthAdjust="spacingAndGlyphs">
      Channel size = 1631 Slope = -12.30
    </Small>
    <Small $cjk x={1784} y={14.5} textLength={87} lengthAdjust="spacingAndGlyphs">
      8/14 06:29 更新
    </Small>
  </PlotSvg>
);

const MacdChart = () => (
  <PlotSvg viewBox="3 800 1871 261" preserveAspectRatio="none">
    <line x1={3} x2={1874} y1={883} y2={883} stroke={RED} strokeWidth={2} />
    <polyline points={toD(macdSignal)} fill="none" stroke="#ffffff" strokeDasharray="3 4" />
    {macdGreen.map((p, i) => (
      <polyline key={i} points={toD(p)} fill="none" stroke="#32cd32" strokeWidth={2} />
    ))}
    {macdPink.map((p, i) => (
      <polyline key={i} points={toD(p)} fill="none" stroke="#db7093" strokeWidth={2} />
    ))}
    <Small x={6.5} y={812}>H1 macd (12)</Small>
  </PlotSvg>
);

const App = () => (
  <>
    <GlobalStyle />
    <Terminal>
      <Row $h={796}>
        <Plot>
          <MainChart />
        </Plot>
        <PriceAxis>
          {priceTicks.map((t) => (
            <PriceTick key={t}>
              <TickMark />
              {t}
            </PriceTick>
          ))}
          <PriceTag>147.238</PriceTag>
        </PriceAxis>
      </Row>
      <Row $h={263}>
        <Plot>
          <MacdChart />
        </Plot>
        <MacdAxis>
          <MacdTick $mt={0}>0.755</MacdTick>
          <MacdTick $mt={64}>
            <ZeroMark />
            0.00
          </MacdTick>
          <MacdTick $mt={158}>-1.647</MacdTick>
        </MacdAxis>
      </Row>
      <Row $h={15}>
        <SessionBar>
          {sessions.map(([w, bg, date], i) => (
            <Session key={i} $w={w} $bg={bg}>
              {date && <SessionDate>{date}</SessionDate>}
            </Session>
          ))}
          <MacdButton>macd ON</MacdButton>
        </SessionBar>
        <VolumeLabel>70000</VolumeLabel>
      </Row>
    </Terminal>
  </>
);

export default App;
